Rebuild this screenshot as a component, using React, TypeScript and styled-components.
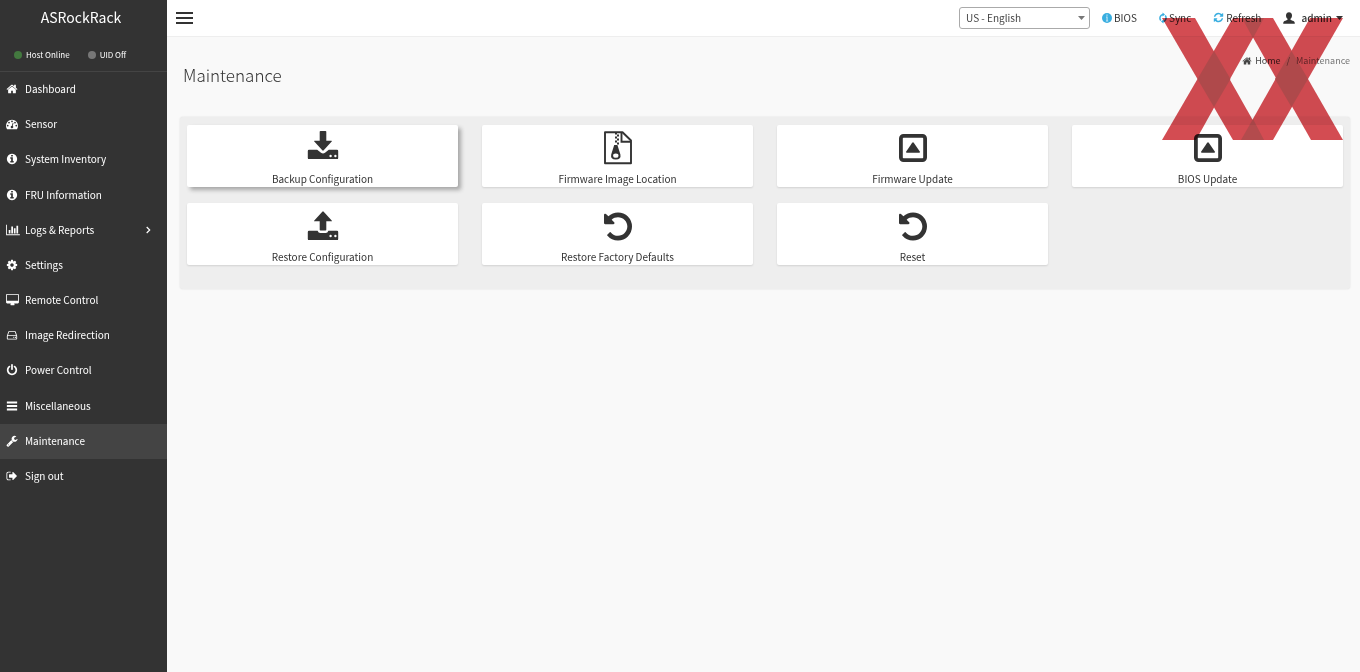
import React from 'react';
import styled, { createGlobalStyle } from 'styled-components';

const GlobalStyle = createGlobalStyle`
  *, *::before, *::after { box-sizing: border-box; }
  body {
    margin: 0;
    background: #f9f9f9;
    color: #333;
    font-family: "Noto Sans CJK SC", "Noto Sans", sans-serif;
    font-size: 10px;
    line-height: 16px;
  }
  a { color: inherit; text-decoration: none; }
  button, select { font: inherit; color: inherit; }
`;

/* ---------- icons ---------- */

const paths = {
  home: 'M1472 992v480q0 26-19 45t-45 19h-384v-384h-256v384h-384q-26 0-45-19t-19-45v-480q0-1 .5-3t.5-3l575-474 575 474q1 2 1 6zm223-69l-62 74q-8 9-21 11h-3q-13 0-21-7l-692-577-692 577q-12 8-24 7-13-2-21-11l-62-74q-8-10-7-23.5t11-21.5l719-599q32-26 76-26t76 26l244 204v-195q0-14 9-23t23-9h192q14 0 23 9t9 23v408l219 182q10 8 11 21.5t-7 23.5z',
  gauge: 'M384 1152q0-53-37.5-90.5t-90.5-37.5-90.5 37.5-37.5 90.5 37.5 90.5 90.5 37.5 90.5-37.5 37.5-90.5zm192-448q0-53-37.5-90.5t-90.5-37.5-90.5 37.5-37.5 90.5 37.5 90.5 90.5 37.5 90.5-37.5 37.5-90.5zm428 481l101-382q6-26-7.5-48.5t-38.5-29.5-48 6.5-30 39.5l-101 382q-60 5-107 43.5t-63 98.5q-20 77 20 146t117 89 146-20 89-117q16-60-6-117t-72-91zm660-33q0-53-37.5-90.5t-90.5-37.5-90.5 37.5-37.5 90.5 37.5 90.5 90.5 37.5 90.5-37.5 37.5-90.5zm-640-640q0-53-37.5-90.5t-90.5-37.5-90.5 37.5-37.5 90.5 37.5 90.5 90.5 37.5 90.5-37.5 37.5-90.5zm448 192q0-53-37.5-90.5t-90.5-37.5-90.5 37.5-37.5 90.5 37.5 90.5 90.5 37.5 90.5-37.5 37.5-90.5zm320 448q0 261-141 483-19 29-54 29h-1402q-35 0-54-29-141-221-141-483 0-182 71-348t191-286 286-191 348-71 348 71 286 191 191 286 71 348z',
  info: 'M1152 1376v-160q0-14-9-23t-23-9h-96v-512q0-14-9-23t-23-9h-320q-14 0-23 9t-9 23v160q0 14 9 23t23 9h96v320h-96q-14 0-23 9t-9 23v160q0 14 9 23t23 9h448q14 0 23-9t9-23zm-128-896v-160q0-14-9-23t-23-9h-192q-14 0-23 9t-9 23v160q0 14 9 23t23 9h192q14 0 23-9t9-23zm640 416q0 209-103 385.5t-279.5 279.5-385.5 103-385.5-103-279.5-279.5-103-385.5 103-385.5 279.5-279.5 385.5-103 385.5 103 279.5 279.5 103 385.5z',
  chart: 'M640 896v512h-256v-512h256zm384-512v1024h-256v-1024h256zm1024 1152v128h-2048v-1536h128v1408h1920zm-640-896v768h-256v-768h256zm384-384v1152h-256v-1152h256z',
  cog: 'M1152 896q0-106-75-181t-181-75-181 75-75 181 75 181 181 75 181-75 75-181zm512-109v222q0 12-8 23t-20 13l-185 28q-19 54-39 91 35 50 107 138 10 12 10 25t-9 23q-27 37-99 108t-94 71q-12 0-26-9l-138-108q-44 23-91 38-16 136-29 186-7 28-36 28h-222q-14 0-24.5-8.5t-11.5-21.5l-28-184q-49-16-90-37l-141 107q-10 9-25 9-14 0-25-11-126-114-165-168-7-10-7-23 0-12 8-23 15-21 51-66.5t54-70.5q-27-50-41-99l-183-27q-13-2-21-12.5t-8-23.5v-222q0-12 8-23t19-13l186-28q14-46 39-92-40-57-107-138-10-12-10-24 0-10 9-23 26-36 98.5-107.5t94.5-71.5q13 0 26 10l138 107q44-23 91-38 16-136 29-186 7-28 36-28h222q14 0 24.5 8.5t11.5 21.5l28 184q49 16 90 37l142-107q9-9 24-9 13 0 25 10 129 119 165 170 7 8 7 22 0 12-8 23-15 21-51 66.5t-54 70.5q26 50 41 98l183 28q13 2 21 12.5t8 23.5z',
  desktop: 'M1792 992v-832q0-13-9.5-22.5t-22.5-9.5h-1600q-13 0-22.5 9.5t-9.5 22.5v832q0 13 9.5 22.5t22.5 9.5h1600q13 0 22.5-9.5t9.5-22.5zm128-832v1088q0 66-47 113t-113 47h-544q0 37 16 77.5t32 71 16 43.5q0 26-19 45t-45 19h-512q-26 0-45-19t-19-45q0-14 16-44t32-70 16-78h-544q-66 0-113-47t-47-113v-1088q0-66 47-113t113-47h1600q66 0 113 47t47 113z',
  disk: 'M256 1088v320q0 13 9.500 22.500t22.500 9.500h1216q13 0 22.500-9.500t9.500-22.500v-320q0-13-9.500-22.500t-22.500-9.500h-1216q-13 0-22.500 9.500t-9.500 22.500zm46-160h1188l-157-482q-4-13-16-21.500t-26-8.500h-790q-14 0-26 8.500t-16 21.500zm1362 160v320q0 66-47 113t-113 47h-1216q-66 0-113-47t-47-113v-320q0-25 16-75l197-606q17-53 63-86t101-33h790q55 0 101 33t63 86l197 606q16 50 16 75zm-560 80h128v160h-128zm240 0h128v160h-128z',
  power: 'M1664 896q0 156-61 298t-164 245-245 164-298 61-298-61-245-164-164-245-61-298q0-182 80.5-343t226.5-270q43-32 95.5-25t83.5 50q32 42 24.5 94.5t-49.5 84.5q-98 74-151.5 181t-53.5 228q0 104 40.5 198.5t109.5 163.5 163.5 109.5 198.5 40.5 198.5-40.5 163.500-109.500 109.500-163.500 40.500-198.500q0-121-53.500-228t-151.500-181q-42-32-49.500-84.500t24.500-94.500q31-43 84-50t95 25q146 109 226.500 270t80.500 343zm-640-768v640q0 52-38 90t-90 38-90-38-38-90v-640q0-52 38-90t90-38 90 38 38 90z',
  bars: 'M128 224h1536v300h-1536zM128 746h1536v300h-1536zM128 1268h1536v300h-1536z',
  wrench: 'M448 1472q0-26-19-45t-45-19-45 19-19 45 19 45 45 19 45-19 19-45zm644-420l-682 682q-37 37-90 37-52 0-91-37l-106-108q-38-36-38-90 0-53 38-91l681-681q39 98 114.500 173.500t173.500 114.500zm634-435q0 39-23 106-47 134-164.500 217.500t-258.500 83.500q-185 0-316.500-131.500t-131.500-316.500 131.500-316.500 316.500-131.500q58 0 121.500 16.500t107.500 46.500q16 11 16 28t-16 28l-293 169v224l193 107q5-3 79-48.500t135.500-81 70.500-35.500q15 0 23.500 10t8.500 25z',
  signout: 'M704 1440q0 4 1 20t.5 26.5-3 23.5-10 19.5-20.5 6.5h-320q-119 0-203.500-84.500t-84.500-203.500v-704q0-119 84.500-203.500t203.500-84.500h320q13 0 22.500 9.500t9.500 22.500q0 4 1 20t.5 26.5-3 23.5-10 19.5-20.5 6.5h-320q-66 0-113 47t-47 113v704q0 66 47 113t113 47h312l11.5 1 11.5 3 8 5.500 7 9 2 13.500zm928-544q0 26-19 45l-544 544q-19 19-45 19t-45-19-19-45v-288h-448q-26 0-45-19t-19-45v-384q0-26 19-45t45-19h448v-288q0-26 19-45t45-19 45 19l544 544q19 19 19 45z',
  refresh: 'M1639 1056q0 5-1 7-64 268-268 434.500t-478 166.500q-146 0-282.500-55t-243.500-157l-129 129q-19 19-45 19t-45-19-19-45v-448q0-26 19-45t45-19h448q26 0 45 19t19 45-19 45l-137 137q71 66 161 102t187 36q134 0 250-65t186-179q11-17 53-117 8-23 30-23h192q13 0 22.500 9.500t9.500 22.500zm25-800v448q0 26-19 45t-45 19h-448q-26 0-45-19t-19-45 19-45l138-138q-148-137-349-137-134 0-250 65t-186 179q-11 17-53 117-8 23-30 23h-199q-13 0-22.500-9.500t-9.500-22.500v-7q65-268 270-434.500t480-166.500q146 0 284 55.500t245 156.500l130-129q19-19 45-19t45 19 19 45z',
  undo: 'M1664 896q0 156-61 298t-164 245-245 164-298 61q-172 0-327-72.500t-264-204.500q-7-10-6.500-22.500t8.500-20.500l137-138q10-9 25-9 16 2 23 12 73 95 179 147t225 52q104 0 198.500-40.500t163.500-109.500 109.500-163.500 40.500-198.500-40.500-198.500-109.500-163.500-163.500-109.500-198.500-40.500q-98 0-188 35.500t-160 101.500l137 138q31 30 14 69-17 40-59 40h-448q-26 0-45-19t-19-45v-448q0-42 40-59 39-17 69 14l130 129q107-101 244.500-156.500t284.500-55.500q156 0 298 61t245 164 164 245 61 298z',
};

type GlyphName = keyof typeof paths;

const glyphWidth: Partial<Record<GlyphName, number>> = { chart: 2048, desktop: 1920 };

function Glyph({ name, size }: { name: GlyphName; size: number }) {
  const w = glyphWidth[name] ?? 1792;
  return (
    <svg width={Math.round((size * w) / 1792)} height={size} viewBox={`0 0 ${w} 1792`} fill="currentColor" aria-hidden="true">
      <path d={paths[name]} />
    </svg>
  );
}

const trayDots = 'M23.600 26.200a1.200 1.200 0 1 0 0-2.400 1.200 1.200 0 0 0 0 2.400zM28.400 26.200a1.200 1.200 0 1 0 0-2.400 1.200 1.200 0 0 0 0 2.400z';

const BackupIcon = () => (
  <svg width="32" height="34" viewBox="0 0 32 34" fill="currentColor" fillRule="evenodd" aria-hidden="true">
    <path d="M13.500 0h5q.8 0 .8.800V9.700h5q1.200 0 .4.900l-8 8.700q-.7.700-1.400 0l-8-8.700q-.8-.9.400-.9h5V.8q0-.8.800-.8z" />
    <path d={'M2 18.700h8.200l3.800 3q2 1.500 4 0l3.800-3H30q1.200 0 1.200 1.200v7q0 1.200-1.200 1.200H2q-1.200 0-1.200-1.200v-7q0-1.200 1.200-1.200z' + trayDots} />
  </svg>
);

const RestoreIcon = () => (
  <svg width="32" height="34" viewBox="0 -2 32 34" fill="currentColor" fillRule="evenodd" aria-hidden="true">
    <path d="M13.500 19.500h5q.8 0 .8-.8V10.300h5q1.200 0 .4-.9l-8-8.700q-.7-.7-1.400 0l-8 8.700q-.8.900.4.900h5v8.400q0 .8.800.8z" />
    <path d={'M2 19.800h8.600q.8 2.200 2.600 2.200h5.600q1.800 0 2.600-2.200H30q1.200 0 1.200 1.200v6.900q0 1.200-1.200 1.200H2q-1.200 0-1.200-1.200V21q0-1.200 1.200-1.200z' + trayDots} />
  </svg>
);

const ZipIcon = () => (
  <svg width="28" height="34" viewBox="0 0 28 34" fill="none" stroke="currentColor" aria-hidden="true">
    <path d="M1 1.200h17.500L27 9.500v22.700H1z" strokeWidth="1.900" strokeLinejoin="round" />
    <path d="M17.500 1.500v9.300H27" strokeWidth="1.900" />
    <path d="M11 2.500h2M13 4.500h2M11 6.500h2M13 8.500h2M11 10.500h2M13 12.500h2" strokeWidth="2" />
    <path fillRule="evenodd" d="M10.200 14h3.200l3 9.500q1 5-4.600 5t-4.600-5zM11.800 22.600q-2.800 0-2.700 2.300.2 1.900 2.700 1.900t2.700-1.900q.1-2.300-2.700-2.300z" fill="currentColor" stroke="none" />
  </svg>
);

const UpdateIcon = () => (
  <svg width="28" height="34" viewBox="0 0 28 34" aria-hidden="true">
    <rect x="1.900" y="4.900" width="24.200" height="24.200" rx="2.600" fill="none" stroke="currentColor" strokeWidth="3.800" />
    <path d="M13.200 11.800q.8-1 1.600 0l6 8.600q.7 1.300-.8 1.300H8q-1.500 0-.8-1.300z" fill="currentColor" />
  </svg>
);

const UndoIcon = () => (
  <svg width="28" height="34" viewBox="128 -64 1536 1865" fill="currentColor" aria-hidden="true">
    <path d={paths.undo} />
  </svg>
);

const SyncIcon = () => (
  <svg width="8" height="12" viewBox="0 0 8 12" fill="none" stroke="currentColor" strokeWidth="1.500" aria-hidden="true">
    <path d="M1.800 8.500A3.200 3.600 0 0 1 4.300 2.500M6.200 3.500A3.200 3.600 0 0 1 3.700 9.500" />
    <path d="M3.500 .5 6 2.500 3.500 4.500zM4.500 7.500 2 9.500 4.500 11.500z" fill="currentColor" stroke="none" />
  </svg>
);

const InfoBadge = () => (
  <svg width="10" height="10" viewBox="0 0 10 10" aria-hidden="true">
    <circle cx="5" cy="5" r="5" fill="currentColor" />
    <path d="M4.400 1.500h1.200v1.200H4.400zM4 3.600h1.600v4h.6v.8H3.900v-.8h.6V4.400H4z" fill="#fff" opacity=".7" />
  </svg>
);

const UserIcon = () => (
  <svg width="12" height="12" viewBox="0 0 12 12" fill="currentColor" aria-hidden="true">
    <path d="M6 .3c2 0 3 1.400 3 3.100 0 1.500-.6 2.700-1.500 3.400v1c1.200.7 3 1.100 3.800 1.900.4.400.5 1 .5 2H.2c0-1 .1-1.600.5-2 .8-.8 2.600-1.200 3.800-1.900v-1C3.600 6.100 3 4.900 3 3.400 3 1.700 4 .3 6 .3z" />
  </svg>
);

const Caret = () => (
  <svg width="7" height="4" viewBox="0 0 7 4" fill="currentColor" aria-hidden="true">
    <path d="M0 0h7L3.500 4z" />
  </svg>
);

const Chevron = () => (
  <svg width="5" height="8" viewBox="0 0 5 8" fill="none" stroke="currentColor" strokeWidth="1.200" aria-hidden="true">
    <path d="M.7 1 3.700 4 .7 7" />
  </svg>
);

/* ---------- sidebar ---------- */

const Shell = styled.div`
  display: grid;
  grid-template-columns: 167px minmax(0, 1fr);
  min-height: 100vh;
  position: relative;
`;

const Sidebar = styled.aside`
  background: #333;
  color: #fff;
`;

const Brand = styled.a`
  display: block;
  height: 36px;
  padding-right: 5px;
  line-height: 35px;
  font-size: 14px;
  text-align: center;
`;

const StatusBar = styled.div`
  display: flex;
  align-items: center;
  gap: 18px;
  height: 36px;
  padding: 3px 14px 0;
  border-bottom: 1px solid #444;
  font-size: 8px;
`;

const Status = styled.span<{ $color: string }>`
  display: flex;
  align-items: center;
  gap: 4px;
  &::before {
    content: '';
    width: 8px;
    height: 8px;
    border-radius: 50%;
    background: ${(p) => p.$color};
  }
`;

const Menu = styled.ul`
  list-style: none;
  margin: 0;
  padding: 0;
  display: grid;
  grid-template-rows: repeat(12, 1fr);
  height: 422px;
`;

const MenuLink = styled.a<{ $active?: boolean }>`
  display: grid;
  grid-template-columns: 19px 1fr auto;
  align-items: center;
  height: 100%;
  padding: 0 16px 1px 6px;
  background: ${(p) => (p.$active ? '#444' : 'transparent')};
  svg { display: block; }
`;

/* ---------- main column ---------- */

const TopBar = styled.header`
  display: flex;
  align-items: center;
  justify-content: space-between;
  height: 37px;
  padding: 0 17px 1px 9px;
  background: #fff;
  border-bottom: 1px solid #eee;
`;

const Burger = styled.button`
  display: grid;
  gap: 3px;
  width: 17px;
  padding: 0;
  border: 0;
  background: none;
  span { height: 2px; background: #333; }
`;

const Tools = styled.div`
  display: flex;
  align-items: center;
`;

const SelectBox = styled.label`
  position: relative;
  display: block;
  margin-right: 12px;
  color: #777;
  svg { position: absolute; right: 5px; top: 9px; pointer-events: none; }
`;

const LanguageSelect = styled.select`
  display: block;
  appearance: none;
  width: 131px;
  height: 22px;
  padding: 0 20px 0 6px;
  border: 1px solid #aaa;
  border-radius: 3px;
  background: #fff;
  color: #444;
`;

const Tool = styled.button`
  display: flex;
  align-items: center;
  gap: 2px;
  margin-right: 22px;
  padding: 0;
  border: 0;
  background: none;
  svg { color: #39aee0; }
`;

const Account = styled.button`
  display: flex;
  align-items: center;
  gap: 6px;
  padding: 0;
  border: 0;
  background: none;
  font-weight: 500;
  svg + span { display: flex; align-items: center; gap: 4px; }
`;

const PageHead = styled.div`
  display: flex;
  justify-content: space-between;
  padding: 16px 10px 0 16px;
  height: 80px;
`;

const Title = styled.h1`
  margin: 10px 0 0;
  font-size: 17px;
  line-height: 24px;
  font-weight: 300;
`;

const Crumbs = styled.nav`
  display: flex;
  gap: 6px;
  height: 16px;
  font-size: 9px;
  color: #777;
  a { display: flex; align-items: center; gap: 3px; color: #444; }
`;

const Panel = styled.section`
  display: grid;
  grid-template-columns: repeat(4, minmax(0, 1fr));
  gap: 16px 24px;
  margin: 0 10px 0 13px;
  padding: 8px 7px 24px;
  border-radius: 3px;
  background: #eee;
  box-shadow: 0 0 2px rgba(0, 0, 0, 0.12);
`;

const Card = styled.a<{ $raised?: boolean }>`
  display: flex;
  flex-direction: column;
  align-items: center;
  justify-content: space-between;
  height: 62px;
  padding-top: 6px;
  border-radius: 2px;
  background: #fff;
  box-shadow: ${(p) => (p.$raised ? '3px 3px 4px rgba(0, 0, 0, 0.3)' : '0 1px 2px rgba(0, 0, 0, 0.12)')};
`;

const Watermark = styled.svg`
  position: absolute;
  top: 18px;
  right: 17px;
  pointer-events: none;
  mix-blend-mode: multiply;
`;

const menu: { icon: GlyphName; label: string; expand?: boolean; active?: boolean }[] = [
  { icon: 'home', label: 'Dashboard' },
  { icon: 'gauge', label: 'Sensor' },
  { icon: 'info', label: 'System Inventory' },
  { icon: 'info', label: 'FRU Information' },
  { icon: 'chart', label: 'Logs & Reports', expand: true },
  { icon: 'cog', label: 'Settings' },
  { icon: 'desktop', label: 'Remote Control' },
  { icon: 'disk', label: 'Image Redirection' },
  { icon: 'power', label: 'Power Control' },
  { icon: 'bars', label: 'Miscellaneous' },
  { icon: 'wrench', label: 'Maintenance', active: true },
  { icon: 'signout', label: 'Sign out' },
];

const cards = [
  { label: 'Backup Configuration', Icon: BackupIcon, raised: true },
  { label: 'Firmware Image Location', Icon: ZipIcon },
  { label: 'Firmware Update', Icon: UpdateIcon },
  { label: 'BIOS Update', Icon: UpdateIcon },
  { label: 'Restore Configuration', Icon: RestoreIcon },
  { label: 'Restore Factory Defaults', Icon: UndoIcon },
  { label: 'Reset', Icon: UndoIcon },
];

export default function App() {
  return (
    <Shell>
      <GlobalStyle />
      <Sidebar>
        <Brand href="#">ASRockRack</Brand>
        <StatusBar>
          <Status $color="#43793f">Host Online</Status>
          <Status $color="#777">UID Off</Status>
        </StatusBar>
        <nav>
          <Menu>
            {menu.map((m) => (
              <li key={m.label}>
                <MenuLink href="#" $active={m.active}>
                  <Glyph name={m.icon} size={12} />
                  <span>{m.label}</span>
                  {m.expand && <Chevron />}
                </MenuLink>
              </li>
            ))}
          </Menu>
        </nav>
      </Sidebar>
      <div>
        <TopBar>
          <Burger aria-label="Toggle menu"><span /><span /><span /></Burger>
          <Tools>
            <SelectBox>
              <LanguageSelect aria-label="Language" defaultValue="en">
                <option value="en">US - English</option>
              </LanguageSelect>
              <Caret />
            </SelectBox>
            <Tool><InfoBadge />BIOS</Tool>
            <Tool><SyncIcon />Sync</Tool>
            <Tool><Glyph name="refresh" size={11} />Refresh</Tool>
            <Account><UserIcon /><span>admin <Caret /></span></Account>
          </Tools>
        </TopBar>
        <main>
          <PageHead>
            <Title>Maintenance</Title>
            <Crumbs aria-label="Breadcrumb">
              <a href="#"><Glyph name="home" size={10} />Home</a>
              <span>/</span>
              <span>Maintenance</span>
            </Crumbs>
          </PageHead>
          <Panel>
            {cards.map(({ label, Icon, raised }) => (
              <Card key={label} href="#" $raised={raised}>
                <Icon />
                <span>{label}</span>
              </Card>
            ))}
          </Panel>
        </main>
      </div>
      <Watermark width="181" height="122" viewBox="0 0 181 122" aria-hidden="true">
        <g fill="#d34c52">
          <path d="M0 0h33l69 122H71z" />
          <path d="M71 0h31L34 122H0z" />
          <path d="M80 0h31l70 122h-32z" />
          <path d="M148 0h33l-70 122H79z" />
        </g>
        <g fill="#b34b4d">
          <path d="M52 33l16.500 28L52 89 35.500 61z" />
          <path d="M129.500 33L146 61l-16.500 28L113 61z" />
          <path d="M80 0h22L91 20z" />
          <path d="M79 122h23L91 101z" />
        </g>
      </Watermark>
    </Shell>
  );
}
